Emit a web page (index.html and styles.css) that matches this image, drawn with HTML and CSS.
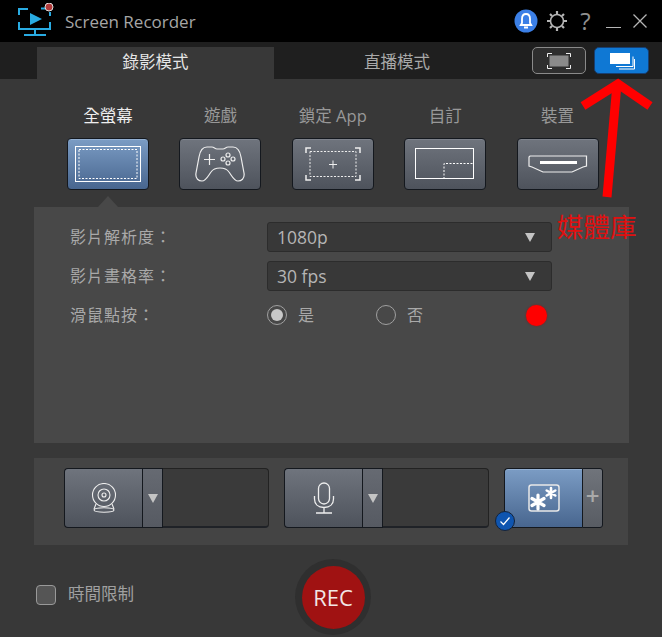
FILE: index.html
```html
<!DOCTYPE html>
<html lang="zh-Hant">
<head>
    <meta charset="UTF-8" />
    <title>Screen Recorder</title>
    <link rel="stylesheet" href="styles.css">
</head>
<body>
<div class="app">
    <header class="titlebar">
        <svg class="logo" width="40" height="34" viewBox="0 0 40 34" fill="none" stroke="#29abe2" stroke-width="2">
            <path d="M13 6H4V12M4 19V26H35V19M35 13V9M26 5.500H30"/>
            <path d="M20 26V32M9 32H31"/>
            <path d="M15 10L27 16L15 22Z" fill="#29abe2" stroke="none"/>
            <circle cx="34" cy="4" r="4" fill="#b23a3a" stroke="#ddd" stroke-width="1"/>
        </svg>
        <span class="app-name">Screen Recorder</span>
        <div class="win-tools">
            <svg class="bell" width="24" height="24" viewBox="0 0 24 24">
                <circle cx="12" cy="12" r="11.500" fill="#3b7fe6"/>
                <path d="M12 5C9 5 8 7.500 8 10V14L6.800 16H17.200L16 14V10C16 7.500 15 5 12 5Z" fill="none" stroke="#fff" stroke-width="1.800"/>
                <rect x="10" y="17.500" width="4" height="2" fill="#fff"/>
            </svg>
            <svg class="gear" width="22" height="22" viewBox="0 0 22 22" fill="none" stroke="#b5b5b5">
                <circle cx="11" cy="11" r="6.500" stroke-width="1.600"/>
                <path stroke-width="2.200" d="M11 1V4M11 18V21M1 11H4M18 11H21M4 4L6 6M16 16L18 18M18 4L16 6M6 16L4 18"/>
            </svg>
            <span class="help">?</span>
            <span class="minimize"></span>
            <svg class="close" width="16" height="16" viewBox="0 0 16 16" stroke="#b5b5b5" stroke-width="1.300"><path d="M1.500 1.500L14.500 14.500M14.500 1.500L1.500 14.500"/></svg>
        </div>
    </header>

    <nav class="tabbar">
        <div class="tab active">錄影模式</div>
        <div class="tab">直播模式</div>
        <div class="view-buttons">
            <button class="view-btn">
                <svg width="24" height="16" viewBox="0 0 24 16" fill="none" stroke="#eee" stroke-width="1">
                    <rect x="2.500" y="2.500" width="19" height="11" fill="#8a8a8a" stroke="none"/>
                    <path d="M.5 4V.5H5M19 .5H23.500V4M23.500 12V15.500H19M5 15.500H.5V12"/>
                </svg>
            </button>
            <button class="view-btn on">
                <svg width="26" height="18" viewBox="0 0 26 18" fill="none" stroke="#fff">
                    <path d="M24 4.500V14.500H7M25.500 7V17H10"/>
                    <rect x="1" y="1" width="20" height="11" fill="#fff" stroke="none"/>
                </svg>
            </button>
        </div>
    </nav>

    <section class="modes">
        <div class="mode selected">
            <span class="mode-label">全螢幕</span>
            <div class="tile blue">
                <svg width="66" height="36" viewBox="0 0 66 36" fill="none" stroke="#fff">
                    <rect x=".5" y=".5" width="65" height="35" stroke-width="1"/>
                    <rect x="4" y="3.500" width="58" height="29" stroke-dasharray="2 1.500"/>
                </svg>
            </div>
        </div>
        <div class="mode">
            <span class="mode-label">遊戲</span>
            <div class="tile">
                <svg width="50" height="36" viewBox="0 0 50 36" fill="none" stroke="#eee" stroke-width="1.200">
                    <path d="M12 1H17C19 1 20 3 22 3H28C30 3 31 1 33 1H38C43 1 45 5 46 11L49 27C50 33 46 35 43 35C39 35 37 30 34 26C32 23 30 22 25 22C20 22 18 23 16 26C13 30 11 35 7 35C4 35 0 33 1 27L4 11C5 5 7 1 12 1Z"/>
                    <path d="M9 13.500H20M14.500 8V19"/>
                    <circle cx="33" cy="9" r="2"/><circle cx="33" cy="17" r="2"/><circle cx="28" cy="13" r="2"/><circle cx="38" cy="13" r="2"/>
                </svg>
            </div>
        </div>
        <div class="mode">
            <span class="mode-label">鎖定 App</span>
            <div class="tile">
                <svg width="56" height="34" viewBox="0 0 56 34" fill="none" stroke="#eee">
                    <path d="M6 1H1V6M50 1H55V6M55 28V33H50M6 33H1V28" stroke-width="1.500"/>
                    <rect x="5" y="4.500" width="46" height="25" stroke-dasharray="2 1.500"/>
                    <path d="M24 17.500H32M28 13.500V21.500"/>
                </svg>
            </div>
        </div>
        <div class="mode">
            <span class="mode-label">自訂</span>
            <div class="tile">
                <svg width="60" height="32" viewBox="0 0 60 32" fill="none" stroke="#fff">
                    <rect x=".5" y=".5" width="58" height="30" stroke-width="1"/>
                    <path d="M29 31V15.500H58" stroke-dasharray="2 1.500"/>
                </svg>
            </div>
        </div>
        <div class="mode">
            <span class="mode-label">裝置</span>
            <div class="tile">
                <svg width="60" height="18" viewBox="0 0 60 18" fill="none" stroke="#eee">
                    <path d="M2 1H58.500V11L55 12L44 17H15L4 12L1 11V2Z" stroke-width="1.200"/>
                    <rect x="12" y="6" width="37" height="3" fill="#fff" stroke="none"/>
                </svg>
            </div>
        </div>
    </section>

    <section class="settings">
        <div class="row">
            <span class="row-label">影片解析度：</span>
            <div class="select"><span>1080p</span><i class="arrow"></i></div>
        </div>
        <div class="row">
            <span class="row-label">影片畫格率：</span>
            <div class="select"><span>30 fps</span><i class="arrow"></i></div>
        </div>
        <div class="row radios">
            <span class="row-label">滑鼠點按：</span>
            <span class="radio checked"></span><span class="radio-text yes">是</span>
            <span class="radio"></span><span class="radio-text no">否</span>
            <span class="dot"></span>
        </div>
    </section>

    <section class="sources">
        <div class="source">
            <div class="src-btn">
                <svg width="26" height="30" viewBox="0 0 26 30" fill="none" stroke="#eee" stroke-width="1.100">
                    <circle cx="13" cy="12" r="11.500"/><circle cx="13" cy="12" r="6"/><circle cx="13" cy="12" r="2"/>
                    <ellipse cx="13" cy="27" rx="10" ry="2.200"/>
                    <path d="M5 21L3 26M21 21L23 26"/>
                </svg>
            </div>
            <div class="src-arrow"><i class="arrow"></i></div>
            <div class="src-well"></div>
        </div>
        <div class="source">
            <div class="src-btn">
                <svg width="22" height="32" viewBox="0 0 22 32" fill="none" stroke="#eee" stroke-width="1.300">
                    <rect x="5.500" y="1" width="11" height="21" rx="5.500"/>
                    <path d="M1.500 14V17C1.500 22 5 25.500 11 25.500C17 25.500 20.500 22 20.500 17V14M11 25.500V31M3 31H19"/>
                </svg>
            </div>
            <div class="src-arrow"><i class="arrow"></i></div>
            <div class="src-well"></div>
        </div>
        <div class="source effect">
            <div class="src-btn blue">
                <svg width="32" height="28" viewBox="0 0 32 28" fill="none" stroke-linecap="round">
                    <rect x="1" y="1" width="30" height="26" rx="2.500" stroke="#e8e8e8" stroke-width="1.500"/>
                    <path d="M10 11V25M4 14.500L16 21.500M16 14.500L4 21.500" stroke="#fff" stroke-width="3.200"/>
                    <path d="M23 4V14M18.700 6.500L27.300 11.500M27.300 6.500L18.700 11.500" stroke="#fff" stroke-width="2.600"/>
                </svg>
            </div>
            <div class="src-plus">+</div>
            <svg class="check" width="20" height="20" viewBox="0 0 20 20" fill="none">
                <circle cx="10" cy="10" r="9.500" fill="#0f55b0" stroke="#14233a"/>
                <path d="M5.500 10.500L8.500 13.500L14.500 6.500" stroke="#fff" stroke-width="1.200"/>
            </svg>
        </div>
    </section>

    <footer class="footer">
        <span class="checkbox"></span>
        <span class="limit">時間限制</span>
        <div class="rec"><span>REC</span></div>
    </footer>

    <div class="note">
        <svg width="80" height="125" viewBox="0 0 80 125" fill="none" stroke="#ff0000">
            <path d="M27 119L37 6" stroke-width="9"/>
            <path d="M3 28L38 6L70 28" stroke-width="9"/>
        </svg>
        <span class="note-text">媒體庫</span>
    </div>
</div>
</body>
</html>
```

FILE: styles.css
```css
* { box-sizing: border-box; }
html, body { margin: 0; height: 100%; }
body { background-color: #383838; color: #a9a9a9; font-family: "Open Sans", "Noto Sans CJK TC", sans-serif; font-size: 16px; }
.app { position: relative; width: 662px; height: 637px; overflow: hidden; background-color: #383838; }

.titlebar { height: 42px; background-color: #000; display: flex; align-items: center; padding-left: 15px; }
.logo { flex: none; margin-top: -2px; }
.app-name { margin-left: 10px; font-size: 17px; color: #a6a6a6; }
.win-tools { margin-left: auto; display: flex; align-items: center; padding-right: 14px; }
.gear { margin-left: 8px; }
.help { font-size: 24px; line-height: 30px; color: #8f8f8f; width: 13px; text-align: center; margin-left: 11px; }
.minimize { width: 15px; height: 1px; background-color: #b5b5b5; margin: 13px 0 0 14px; }
.close { margin-left: 11px; }

.tabbar { height: 37px; background-color: #1f1f1f; display: flex; padding: 5px 0 0 37px; }
.tab { width: 237px; height: 32px; line-height: 30px; text-align: center; font-size: 16.500px; color: #a9a9a9; }
.tab + .tab { width: 246px; }
.tab.active { background-color: #383838; color: #e6e6e6; }
.view-buttons { display: flex; gap: 8px; margin-left: 12px; }
.view-btn { width: 54px; height: 27px; padding: 0; border: 1px solid #8a8a8a; border-radius: 5px; background-color: #2e2e2e; display: flex; align-items: center; justify-content: center; }
.view-btn.on { width: 55px; background-color: #0f78d4; border-color: #173f72; }

.modes { height: 128px; display: flex; gap: 30.400px; padding: 26px 0 0 67px; }
.mode { position: relative; width: 82px; display: flex; flex-direction: column; align-items: center; }
.mode-label { height: 22px; line-height: 22px; font-size: 16.500px; color: #989898; white-space: nowrap; margin-bottom: 11px; }
.mode.selected .mode-label { color: #eee; }
.mode.selected::after { content: ""; position: absolute; left: 31px; top: 91px; border: 10px solid transparent; border-top: 0; border-bottom: 11px solid #484848; }
.tile { width: 82px; height: 52px; border: 1px solid #14181e; border-radius: 4px; background: linear-gradient(#6f747d, #4e535c); box-shadow: inset 0 1px 0 #7d828b; display: flex; align-items: center; justify-content: center; }
.blue { background: linear-gradient(#7b9cc4, #48668f); box-shadow: inset 0 1px 0 #93b0d2; }

.settings { height: 236px; background-color: #484848; margin: 0 33px 15px 34px; padding: 15px 0 0 36px; }
.row { display: flex; align-items: center; height: 30px; margin-bottom: 9px; }
.row-label { width: 197px; font-size: 16px; line-height: 28px; letter-spacing: 1px; color: #a9a9a9; white-space: nowrap; }
.select { width: 285px; height: 30px; padding: 0 16px 0 9px; border: 1px solid #2c2c2c; border-radius: 3px; background-color: #383838; display: flex; align-items: center; justify-content: space-between; font-size: 17.500px; color: #b5b5b5; }
.arrow { display: block; width: 0; height: 0; border: 5.500px solid transparent; border-top: 9px solid #c4c4c4; border-bottom: 0; }
.radio { width: 20px; height: 20px; border: 1px solid #a0a0a0; border-radius: 50%; flex: none; }
.radio.checked { background-color: #c9c9c9; background-clip: content-box; padding: 3px; }
.radio-text { font-size: 16px; line-height: 26px; color: #a9a9a9; margin-left: 11px; }
.radio-text.yes { width: 78px; }
.radio-text.no { width: 119px; }
.dot { width: 21px; height: 21px; border-radius: 50%; background-color: #ff0000; box-shadow: 0 0 2px #a01010; }

.sources { height: 87px; background-color: #444; margin: 0 34px; padding: 10px 0 0 30px; display: flex; gap: 15px; }
.source { position: relative; display: flex; height: 60px; width: 205px; }
.source.effect { width: 99px; }
.src-btn { width: 78px; border: 1px solid #14181e; border-right: 0; border-radius: 4px 0 0 4px; background: linear-gradient(#6f747d, #4e535c); display: flex; align-items: center; justify-content: center; }
.src-btn.blue { background: linear-gradient(#7b9cc4, #48668f); }
.src-arrow { width: 21px; border: 1px solid #14181e; background: linear-gradient(#666a72, #565a62); display: flex; align-items: center; justify-content: center; }
.src-well { flex: 1; border: 1px solid #222; border-bottom: 2px solid #1f2227; border-left: 0; border-radius: 0 4px 4px 0; background-color: #3a3a3a; }
.src-plus { width: 21px; border: 1px solid #14181e; border-radius: 0 3px 3px 0; background: linear-gradient(#70747b, #585c63); color: #aaa; font-size: 24px; font-weight: 600; line-height: 54px; text-align: center; }
.check { position: absolute; left: -9px; bottom: -3px; }

.footer { position: relative; display: flex; align-items: center; height: 92px; padding: 8px 0 0 36px; }
.checkbox { width: 20px; height: 20px; border: 1px solid #999; border-radius: 4px; background-color: #555; }
.limit { margin-left: 12px; font-size: 16.500px; line-height: 22px; margin-top: -2px; color: #a0a0a0; }
.rec { position: absolute; left: 295px; top: 14px; width: 76px; height: 76px; border-radius: 50%; background-color: #2f2f2f; display: flex; align-items: center; justify-content: center; }
.rec span { width: 63px; height: 63px; border-radius: 50%; background-color: #a01212; color: #f2e6e6; font-size: 22px; line-height: 63px; text-align: center; }

.note { position: absolute; left: 555px; top: 78px; width: 100px; height: 170px; }
.note svg { position: absolute; left: 25px; top: 0; }
.note-text { position: absolute; left: 2px; top: 131px; font-family: "Liberation Serif", "Noto Sans CJK TC", serif; font-size: 26.500px; line-height: 38px; color: #e01010; white-space: nowrap; }
```
